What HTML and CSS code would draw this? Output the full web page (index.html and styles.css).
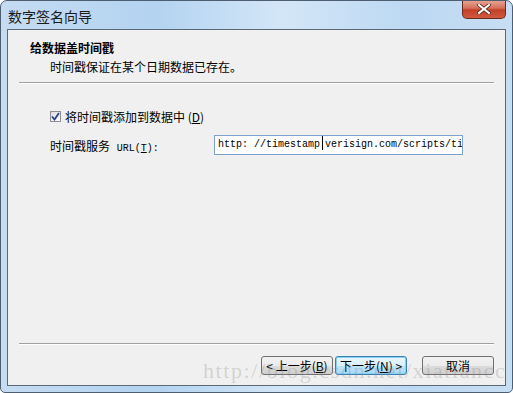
FILE: index.html
```html
<!DOCTYPE html>
<html lang="zh-CN">
<head>
  <meta charset="UTF-8">
  <title>数字签名向导</title>
  <link rel="stylesheet" href="styles.css">
</head>
<body>

  <div class="window">
    <div class="titlebar">
      <span class="caption">数字签名向导</span>
      <div class="close">
        <svg width="14" height="10" viewBox="0 0 14 10">
          <path d="M2 1 L12 9 M12 1 L2 9" stroke="#5a2a20" stroke-width="3.6" stroke-linecap="square"/>
          <path d="M2 1 L12 9 M12 1 L2 9" stroke="#ffffff" stroke-width="2" stroke-linecap="square"/>
        </svg>
      </div>
    </div>

    <div class="client">
      <div class="header">
        <div class="head-title">给数据盖时间戳</div>
        <div class="head-sub">时间戳保证在某个日期数据已存在。</div>
      </div>
      <div class="rule"></div>

      <div class="content">
        <label class="check-row">
          <span class="checkbox">
            <svg width="9" height="9" viewBox="0 0 9 9">
              <path d="M1 4.5 L3.5 7.5 L8 1" fill="none" stroke="#2a3f8c" stroke-width="1.8"/>
            </svg>
          </span>
          <span>将时间戳添加到数据中 (<u>D</u>)</span>
        </label>

        <div class="url-row">
          <span class="url-label">时间戳服务 <span class="latin">URL(<u>T</u>):</span></span>
          <div class="url-input">http: //timestamp<span class="caret"></span>verisign.com/scripts/ti</div>
        </div>
      </div>

      <div class="rule"></div>

      <div class="buttons">
        <button class="btn">&lt; 上一步(<u>B</u>)</button>
        <button class="btn btn-default">下一步(<u>N</u>) &gt;</button>
        <button class="btn btn-cancel">取消</button>
      </div>
    </div>

    <div class="watermark">http://blog.csdn.net/xiatiancc</div>
  </div>

</body>
</html>
```

FILE: styles.css
```css
body {
  margin: 0;
  padding: 0;
  background: #ffffff;
  font-family: "Noto Sans CJK SC", "Liberation Sans", sans-serif;
  font-size: 12px;
  color: #000000;
}

.window {
  position: relative;
  width: 513px;
  height: 393px;
  box-sizing: border-box;
  border: 1px solid #4d5e70;
  border-radius: 7px 7px 5px 5px;
  background: linear-gradient(to right, #c5dcf2 0%, #b3d3f1 30%, #d3e6f7 55%, #bcd8f2 80%, #c7def3 100%);
  display: flex;
  flex-direction: column;
  overflow: hidden;
}

.titlebar {
  height: 28px;
  display: flex;
  justify-content: space-between;
  align-items: flex-start;
}

.caption {
  margin: 6px 0 0 7px;
  font-size: 14px;
  line-height: 18px;
  color: #1a1a1a;
}

.close {
  width: 44px;
  height: 19px;
  margin-right: 6px;
  margin-top: -1px;
  box-sizing: border-box;
  border: 1px solid #6a2a22;
  border-top: none;
  border-radius: 0 0 5px 5px;
  background: linear-gradient(to bottom, #e8a898 0%, #d6715c 45%, #c2402a 55%, #cf5a3e 100%);
  display: flex;
  align-items: center;
  justify-content: center;
}

.client {
  flex: 1;
  margin: 0 6px 6px 6px;
  border: 1px solid #5b6876;
  background: #f0f0f0;
  display: flex;
  flex-direction: column;
}

.header {
  padding: 11px 0 0 22px;
  height: 41px;
}

.head-title {
  font-weight: bold;
  line-height: 14px;
}

.head-sub {
  margin-top: 5px;
  padding-left: 20px;
  line-height: 14px;
}

.rule {
  margin: 0 11px;
  height: 1px;
  background: #a0a0a0;
  border-bottom: 1px solid #ffffff;
}

.content {
  flex: 1;
  padding: 25px 0 0 42px;
}

.check-row {
  display: flex;
  align-items: center;
  gap: 4px;
  height: 14px;
}

.checkbox {
  width: 11px;
  height: 11px;
  box-sizing: border-box;
  border: 1px solid #8e8f8f;
  background: linear-gradient(135deg, #dcdcdc, #ffffff);
  display: flex;
  align-items: center;
  justify-content: center;
}

.url-row {
  display: flex;
  align-items: center;
  margin-top: 12px;
}

.url-label {
  width: 164px;
}

.latin {
  margin-left: 4px;
  font-family: "Liberation Mono", monospace;
  font-size: 10px;
}

.url-input {
  width: 249px;
  height: 20px;
  box-sizing: border-box;
  border: 1px solid #7da2ce;
  background: #ffffff;
  padding-left: 3px;
  font-family: "Liberation Mono", monospace;
  font-size: 10px;
  line-height: 18px;
  white-space: nowrap;
  overflow: hidden;
}

.caret {
  display: inline-block;
  width: 1px;
  height: 14px;
  background: #000000;
  margin: 0 2px;
  vertical-align: -3px;
}

.buttons {
  height: 40px;
  display: flex;
  justify-content: flex-end;
  align-items: center;
  gap: 2px;
  padding-right: 11px;
}

.btn {
  width: 72px;
  height: 19px;
  padding: 0;
  border: 1px solid #707070;
  border-radius: 3px;
  background: linear-gradient(to bottom, #f2f2f2 0%, #ebebeb 50%, #dddddd 51%, #cfcfcf 100%);
  font-family: "Noto Sans CJK SC", sans-serif;
  font-size: 12px;
  line-height: 15px;
  color: #000000;
}

.btn-default {
  border-color: #3c7fb1;
  background: linear-gradient(to bottom, #eaf6fd 0%, #d9f0fc 50%, #bee6fd 51%, #a7d9f5 100%);
  box-shadow: inset 0 0 0 1px #8ad1f5;
}

.btn-cancel {
  margin-left: 13px;
}

.watermark {
  position: absolute;
  left: 202px;
  top: 357px;
  font-family: "Liberation Serif", serif;
  font-size: 22px;
  letter-spacing: 1.6px;
  color: rgba(140, 140, 140, 0.3);
  pointer-events: none;
}
```
